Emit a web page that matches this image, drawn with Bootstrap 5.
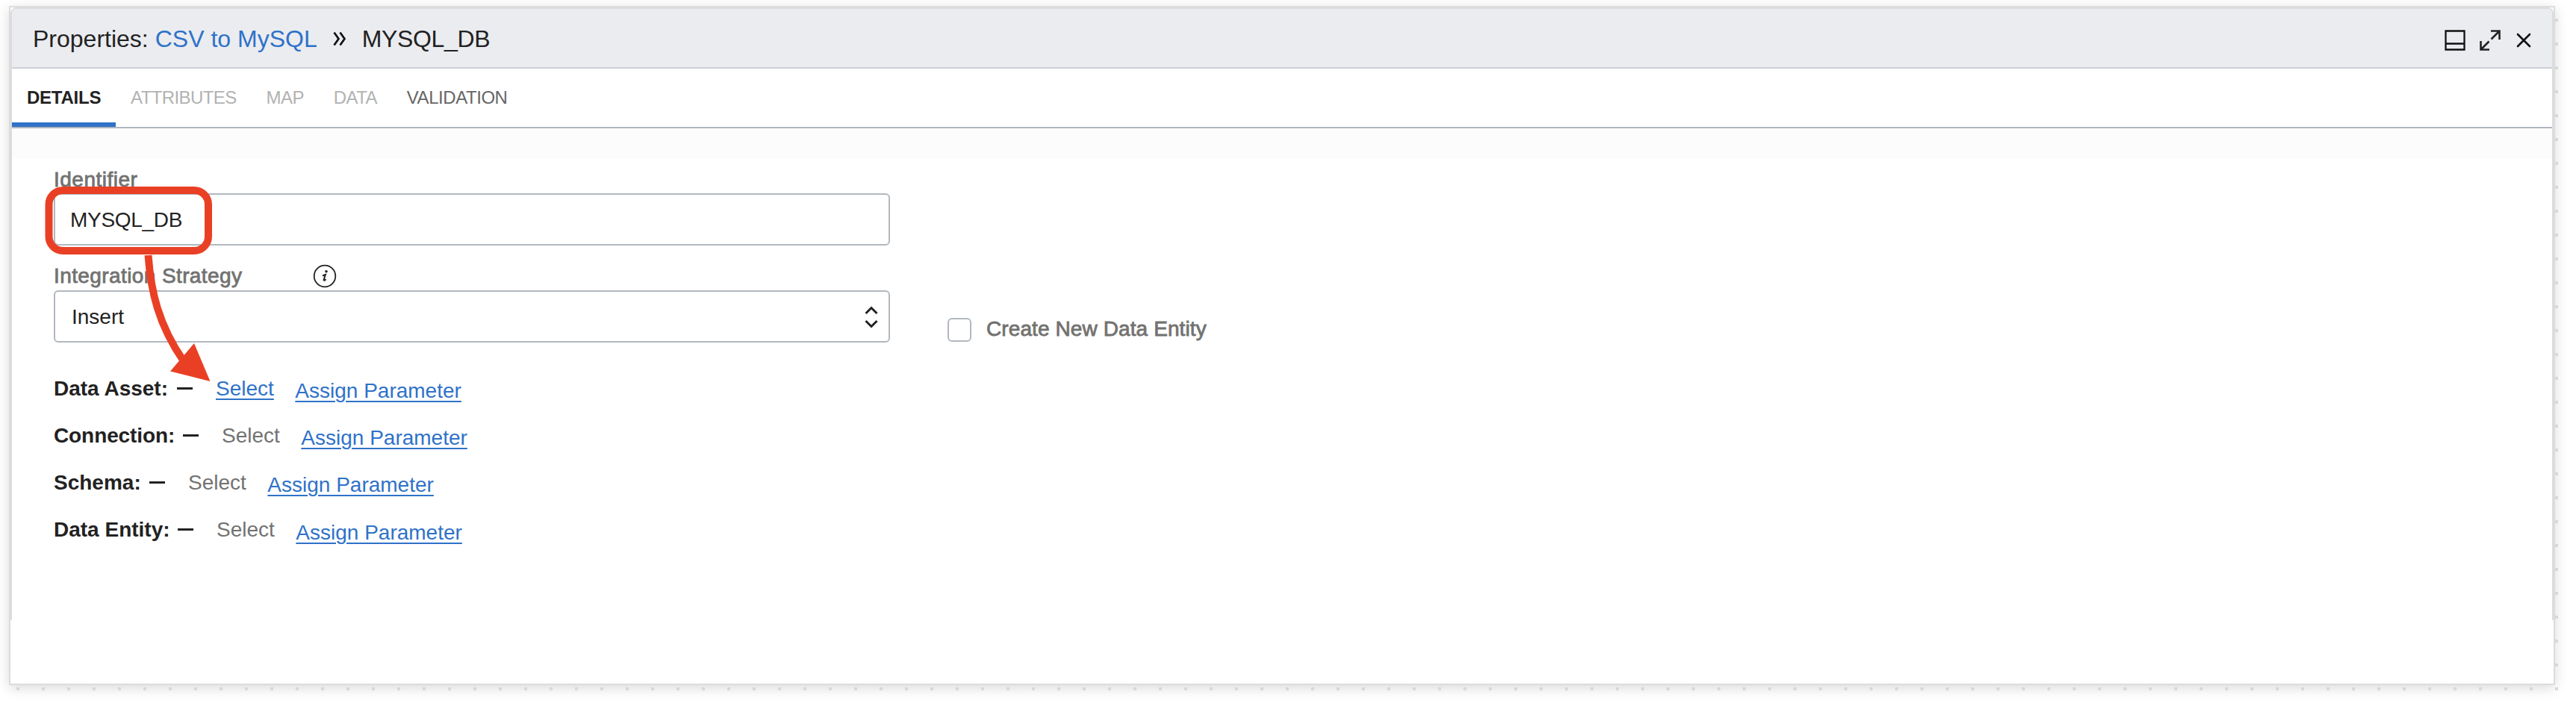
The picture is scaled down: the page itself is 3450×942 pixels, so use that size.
<!DOCTYPE html>
<html lang="en">
<head>
<meta charset="utf-8">
<title>Properties: CSV to MySQL</title>
<link rel="stylesheet" href="https://cdn.jsdelivr.net/npm/bootstrap@5.3.0/dist/css/bootstrap.min.css">
<style>
body{font-family:"Liberation Sans",Arial,sans-serif;font-size:28px;line-height:40px;color:#222;background:#fff;height:942px;overflow:hidden;padding:8px 24px 0 12px}
a{color:#2f72c8}
.canvas-area{position:relative;width:3410px;height:910px}
.panel{position:relative;height:910px;border:2px solid #dcdcdc;box-shadow:0 4px 16px rgba(0,0,0,.15);background:#fff}
.panel-frame{height:821px;border:solid #dcdcdc;border-width:2px 2px 0;border-radius:8px 8px 0 0}
.dots-right{position:absolute;left:3410px;top:17px;width:4px;height:900px;background:repeating-linear-gradient(#d8d8d8 0 4px,transparent 4px 32px)}
.dots-bottom{position:absolute;left:10px;top:913px;width:3404px;height:4px;background:repeating-linear-gradient(90deg,#d8d8d8 0 4px,transparent 4px 34px)}
.titlebar{height:80px;background:#ebecf0;border-bottom:2px solid #ccd0d7;border-radius:5px 5px 0 0;padding:2px 28px 0 28px;font-size:32px}
.titlebar a{margin-left:9px}
.titlebar .sep{margin:0 21px 0 21px}
.tabs{height:80px;border-bottom:2px solid #b0b6bf;font-size:24px}
.tabs .nav-link{padding:0 20px;color:#b2b2b2;height:78px;line-height:77px;border-radius:0;letter-spacing:-.6px}
.tabs .nav-link.active{color:#222;font-weight:bold;border-bottom:6px solid #2f72c8;width:139px;letter-spacing:-.25px}
.tabs .nav-link.open{color:#666;letter-spacing:-.45px}
.band{height:40px;background:#fcfcfc}
.details{padding-left:56px}
.cap{color:#727270;-webkit-text-stroke:.8px #727270;height:40px;line-height:40px}
.field{width:1120px;height:70px;border:2px solid #b2b8c0;border-radius:6px;background:#fff;padding:2px 14px 0 22px}
.check{width:32px;height:32px;border:2px solid #b2b8c0;border-radius:6px}
.pair{height:63px}
.pair b{white-space:nowrap;flex:none}
.pair .pick{color:#727272;margin-left:31px}
.pair a.pick{color:#2f72c8}
.pair a{text-decoration-thickness:1.5px;text-underline-offset:4px}
.pair .assign{margin-left:28.500px;position:relative;top:3px}
.dash{width:21px;height:3px;background:#222;margin-left:12px}
.marker{position:absolute;left:44px;top:240px;overflow:visible;pointer-events:none}
</style>
<script src="https://cdn.jsdelivr.net/npm/bootstrap@5.3.0/dist/js/bootstrap.bundle.min.js"></script>
</head>
<body>
<div class="canvas-area">
<main class="panel">
<div class="panel-frame">
  <header class="titlebar d-flex align-items-center">
    <span>Properties:</span><a href="#" class="text-decoration-none">CSV to MySQL</a>
    <svg class="sep" width="18" height="20" viewBox="0 0 18 20" fill="none" stroke="#111" stroke-width="2.700"><path d="M1.500 1.500 7.500 10l-6 8.500M9.500 1.500 15.500 10l-6 8.500"/></svg>
    <span style="letter-spacing:-.35px">MYSQL_DB</span>
    <div class="ms-auto d-flex align-items-center pt-1">
      <svg width="28" height="28" viewBox="0 0 28 28" fill="none" stroke="#111" stroke-width="2.300"><path d="M1.500 1.500h25v25h-25zM1.500 18.500h25"/></svg>
      <svg style="margin-left:19px" width="28" height="28" viewBox="0 0 28 28" fill="none" stroke="#222" stroke-width="2.600"><path d="M15 1.500h11.500V13M26 2 15.500 12.500M1.500 15v11.500H13M2 26l10.500-10.500"/></svg>
      <svg style="margin-left:21px" width="20" height="20" viewBox="0 0 20 20" fill="none" stroke="#111" stroke-width="2.600" stroke-linecap="round"><path d="m2 2 16 16M18 2 2 18"/></svg>
    </div>
  </header>
  <nav class="tabs nav flex-nowrap">
    <a class="nav-link active" href="#">DETAILS</a>
    <a class="nav-link" href="#">ATTRIBUTES</a>
    <a class="nav-link" href="#">MAP</a>
    <a class="nav-link" href="#">DATA</a>
    <a class="nav-link open" href="#">VALIDATION</a>
  </nav>
  <div class="band"></div>
  <section class="details">
    <div class="cap" style="padding-top:1px;margin-top:8px;letter-spacing:.5px">Identifier</div>
    <div class="field d-flex align-items-center" style="margin-top:-1px;padding-left:20px;letter-spacing:-.3px">MYSQL_DB</div>
    <div class="cap d-flex align-items-center" style="margin-top:21px;letter-spacing:.4px">Integration Strategy
      <svg style="margin-left:95px" width="32" height="32" viewBox="0 0 32 32"><circle cx="16" cy="16" r="14.300" fill="none" stroke="#222" stroke-width="1.800"/><circle cx="18" cy="9.800" r="1.800" fill="#222"/><path d="M13 15.500l3.900-1.500-2.300 7q-.3 1.800 3-.8" fill="none" stroke="#222" stroke-width="2"/></svg>
    </div>
    <div class="d-flex" style="margin-top:-1px">
      <div class="field d-flex align-items-center justify-content-between"><span>Insert</span>
        <svg width="18" height="30" viewBox="0 0 18 30" fill="none" stroke="#222" stroke-width="3"><path d="m1.500 10 7.500-7.500L16.500 10M1.500 20l7.500 7.500 7.500-7.500"/></svg></div>
      <div class="d-flex align-items-center" style="margin:37px 0 0 77px;height:32px"><span class="check"></span><span class="cap" style="margin:-2px 0 0 20px;letter-spacing:.1px">Create New Data Entity</span></div>
    </div>
    <div style="margin-top:30px">
      <div class="pair d-flex align-items-center"><b style="width:153px">Data Asset:</b><span class="dash"></span><a href="#" class="pick">Select</a><a href="#" class="assign">Assign Parameter</a></div>
      <div class="pair d-flex align-items-center"><b style="width:161px;letter-spacing:-.1px">Connection:</b><span class="dash"></span><span class="pick">Select</span><a href="#" class="assign">Assign Parameter</a></div>
      <div class="pair d-flex align-items-center"><b style="width:116px">Schema:</b><span class="dash"></span><span class="pick">Select</span><a href="#" class="assign">Assign Parameter</a></div>
      <div class="pair d-flex align-items-center"><b style="width:154px">Data Entity:</b><span class="dash"></span><span class="pick">Select</span><a href="#" class="assign" style="top:4px">Assign Parameter</a></div>
    </div>
  </section>
</div>
<svg class="marker" width="240" height="270" viewBox="58 250 240 270"><rect x="65.500" y="255" width="213.500" height="81" rx="19" fill="none" stroke="#e94025" stroke-width="10"/><path d="M198.500 342C202 390 212 435 246 484" fill="none" stroke="#e94025" stroke-width="10"/><path d="M260 460 281.500 511 228 497.500z" fill="#e94025"/></svg>
</main>
<div class="dots-right"></div>
<div class="dots-bottom"></div>
</div>
</body>
</html>
